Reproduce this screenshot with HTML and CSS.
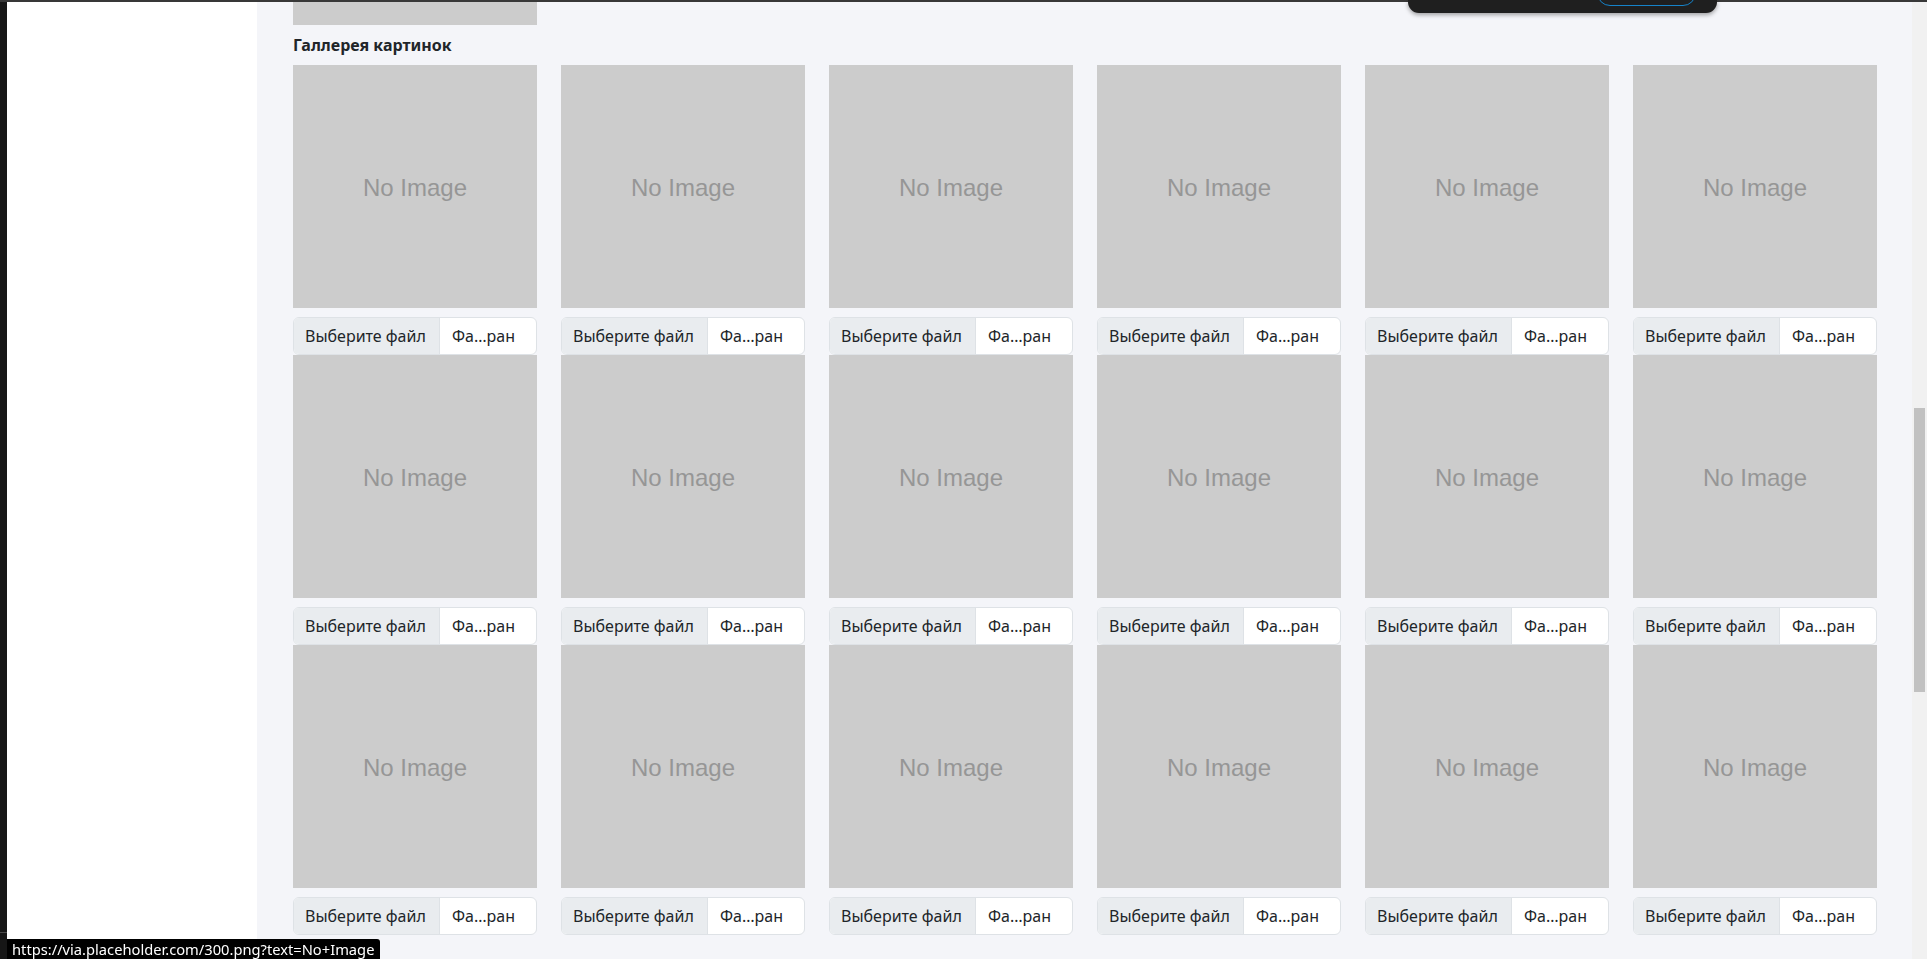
FILE: index.html
```html
<!DOCTYPE html>
<html lang="ru">
<head>
<meta charset="utf-8">
<title>Галлерея</title>
<link rel="stylesheet" href="styles.css">
</head>
<body>
<div class="topline"></div>
<div class="app">
  <div class="edge"><div class="edge-line"></div></div>
  <aside class="sidebar"></aside>
  <main class="main">
    <div class="prev-img"></div>
    <h6 class="gallery-title">Галлерея картинок</h6>
    <div class="gallery">
      <div class="tile"><div class="ph">No Image</div><div class="file"><span class="file-btn">Выберите файл</span><span class="file-name">Фа…ран</span></div></div>
      <div class="tile"><div class="ph">No Image</div><div class="file"><span class="file-btn">Выберите файл</span><span class="file-name">Фа…ран</span></div></div>
      <div class="tile"><div class="ph">No Image</div><div class="file"><span class="file-btn">Выберите файл</span><span class="file-name">Фа…ран</span></div></div>
      <div class="tile"><div class="ph">No Image</div><div class="file"><span class="file-btn">Выберите файл</span><span class="file-name">Фа…ран</span></div></div>
      <div class="tile"><div class="ph">No Image</div><div class="file"><span class="file-btn">Выберите файл</span><span class="file-name">Фа…ран</span></div></div>
      <div class="tile"><div class="ph">No Image</div><div class="file"><span class="file-btn">Выберите файл</span><span class="file-name">Фа…ран</span></div></div>
      <div class="tile"><div class="ph">No Image</div><div class="file"><span class="file-btn">Выберите файл</span><span class="file-name">Фа…ран</span></div></div>
      <div class="tile"><div class="ph">No Image</div><div class="file"><span class="file-btn">Выберите файл</span><span class="file-name">Фа…ран</span></div></div>
      <div class="tile"><div class="ph">No Image</div><div class="file"><span class="file-btn">Выберите файл</span><span class="file-name">Фа…ран</span></div></div>
      <div class="tile"><div class="ph">No Image</div><div class="file"><span class="file-btn">Выберите файл</span><span class="file-name">Фа…ран</span></div></div>
      <div class="tile"><div class="ph">No Image</div><div class="file"><span class="file-btn">Выберите файл</span><span class="file-name">Фа…ран</span></div></div>
      <div class="tile"><div class="ph">No Image</div><div class="file"><span class="file-btn">Выберите файл</span><span class="file-name">Фа…ран</span></div></div>
      <div class="tile"><div class="ph">No Image</div><div class="file"><span class="file-btn">Выберите файл</span><span class="file-name">Фа…ран</span></div></div>
      <div class="tile"><div class="ph">No Image</div><div class="file"><span class="file-btn">Выберите файл</span><span class="file-name">Фа…ран</span></div></div>
      <div class="tile"><div class="ph">No Image</div><div class="file"><span class="file-btn">Выберите файл</span><span class="file-name">Фа…ран</span></div></div>
      <div class="tile"><div class="ph">No Image</div><div class="file"><span class="file-btn">Выберите файл</span><span class="file-name">Фа…ран</span></div></div>
      <div class="tile"><div class="ph">No Image</div><div class="file"><span class="file-btn">Выберите файл</span><span class="file-name">Фа…ран</span></div></div>
      <div class="tile"><div class="ph">No Image</div><div class="file"><span class="file-btn">Выберите файл</span><span class="file-name">Фа…ран</span></div></div>
    </div>
  </main>
  <div class="scrollbar"><div class="thumb"></div></div>
</div>
<div class="toast-panel"><div class="toast-btn"></div></div>
<div class="status">https://via.placeholder.com/300.png?text=No+Image</div>
</body>
</html>
```

FILE: styles.css
```css
* { box-sizing: border-box; }

html, body {
  margin: 0;
  padding: 0;
  height: 100%;
  overflow: hidden;
}

body {
  font-family: "Noto Sans", "Open Sans", sans-serif;
  color: #212529;
  background: #f4f5f9;
}

.topline {
  height: 2px;
  background: #383838;
}

.app {
  display: flex;
  height: calc(100vh - 2px);
}

.edge {
  width: 7px;
  flex: none;
  background: #161616;
  padding-top: 930px;
}

.edge-line {
  height: 1px;
  background: #4a4a4a;
}

.sidebar {
  width: 250px;
  flex: none;
  background: #ffffff;
}

.main {
  flex: 1;
  background: #f4f5f9;
  padding: 0 37px 0 36px;
  overflow: hidden;
}

.prev-img {
  width: 244px;
  height: 23px;
  background: #cccccc;
}

.gallery-title {
  margin: 8px 0;
  font-size: 16px;
  line-height: 24px;
  font-weight: 700;
  color: #212529;
}

.gallery {
  display: grid;
  grid-template-columns: repeat(6, 244px);
  column-gap: 24px;
}

.tile {
  display: flex;
  flex-direction: column;
}

.ph {
  height: 243px;
  background: #cccccc;
  color: #969696;
  font-family: "Liberation Sans", Arial, sans-serif;
  font-size: 24px;
  padding-top: 2px;
  display: flex;
  align-items: center;
  justify-content: center;
}

.file {
  margin-top: 9px;
  height: 38px;
  display: flex;
  border: 1px solid #dee2e6;
  border-radius: 6px;
  overflow: hidden;
  background: #ffffff;
  font-size: 16px;
  line-height: 36px;
}

.file-btn {
  width: 146px;
  flex: none;
  background: #e9ecef;
  border-right: 1px solid #dee2e6;
  padding-left: 11px;
  white-space: nowrap;
}

.file-name {
  padding-left: 12px;
  white-space: nowrap;
}

.scrollbar {
  width: 15px;
  flex: none;
  background: #f1f1f1;
  padding: 406px 2px 0 2px;
}

.thumb {
  height: 284px;
  background: #c1c1c1;
}

.toast-panel {
  position: fixed;
  top: 0;
  left: 1408px;
  width: 309px;
  height: 13px;
  background: #1f1f1f;
  border-radius: 0 0 11px 11px;
  box-shadow: 0 2px 4px rgba(0, 0, 0, 0.35);
  overflow: hidden;
}

.toast-btn {
  position: absolute;
  left: 189px;
  top: -20px;
  width: 99px;
  height: 26px;
  border: 1px solid #1683c9;
  border-radius: 13px;
}

.status {
  position: fixed;
  left: 7px;
  bottom: 0;
  height: 20px;
  padding: 0 6px 0 5px;
  background: #000000;
  color: #ffffff;
  font-family: "Noto Sans", sans-serif;
  font-size: 14.7px;
  line-height: 20px;
  border-top-right-radius: 3px;
  white-space: nowrap;
}
```
